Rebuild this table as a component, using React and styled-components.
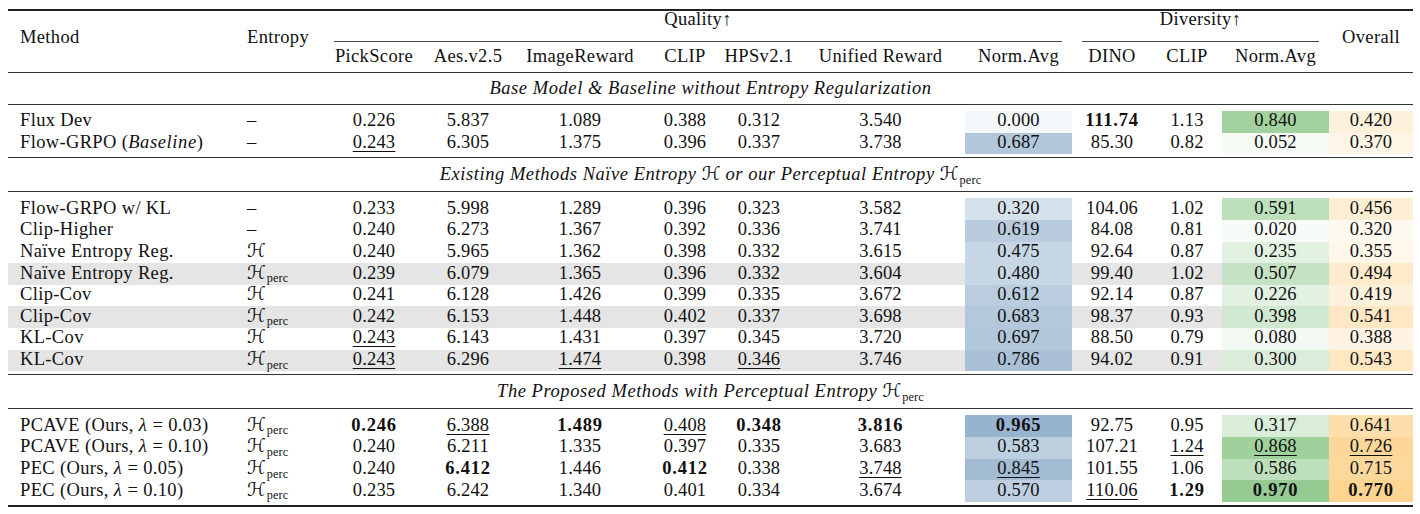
import React from "react";
import styled, { createGlobalStyle } from "styled-components";

const GlobalStyle = createGlobalStyle`
  body {
    margin: 0;
    background: #fff;
  }
`;

const Page = styled.div`
  padding: 9px 7px 0 8px;
  font-family: "Liberation Serif", "DejaVu Serif", serif;
  font-size: 18.5px;
  color: #111;
  letter-spacing: 0.35px;
`;

const Table = styled.table`
  width: 1405px;
  table-layout: fixed;
  border-collapse: separate;
  border-spacing: 0;
`;

const RuleCell = styled.td`
  padding: 0;
  height: 0;
  font-size: 0;
  line-height: 0;
  border-top: ${(p) => p.$w || 1}px solid ${(p) => (p.$w > 1 ? "#222" : "#333")};
`;

const GapCell = styled.td`
  padding: 0;
  font-size: 0;
  line-height: 0;
  height: ${(p) => p.$h}px;
`;

const HeadCell = styled.th`
  font-weight: 400;
  padding: 0 0 9px ${(p) => (p.$left ? "12px" : "0")};
  text-align: ${(p) => (p.$left ? "left" : "center")};
  vertical-align: middle;
  white-space: nowrap;
`;

const GroupCell = styled.th`
  font-weight: 400;
  padding: 0 10px;
  vertical-align: top;
`;

const GroupLabel = styled.div`
  height: 30px;
  line-height: 17px;
  text-align: center;
  border-bottom: 1px solid #444;
`;

const SubHead = styled.th`
  font-weight: 400;
  height: 29px;
  padding: 0 0 1px;
  text-align: center;
  vertical-align: middle;
  white-space: nowrap;
`;

const SectionCell = styled.td`
  height: ${(p) => p.$h - 1}px;
  padding: ${(p) => (p.$h > 31 ? "1px" : "0")} 0 1px;
  text-align: center;
  vertical-align: middle;
  font-style: italic;
  letter-spacing: 0.55px;
  white-space: nowrap;
`;

const DataRow = styled.tr`
  background: ${(p) => (p.$shade ? "#e5e5e5" : "transparent")};
`;

const Cell = styled.td`
  height: 19.65px;
  padding: 0 0 2px ${(p) => (p.$left ? "12px" : "0")};
  line-height: 19px;
  text-align: ${(p) => (p.$left ? "left" : "center")};
  vertical-align: middle;
  white-space: nowrap;
  background: ${(p) => p.$bg || "transparent"};
`;

const Value = styled.span`
  font-weight: ${(p) => (p.$bold ? 700 : 400)};
  text-decoration: ${(p) => (p.$under ? "underline" : "none")};
  text-decoration-thickness: 1px;
  text-underline-offset: 3px;
  letter-spacing: ${(p) => (p.$bold ? "0.8px" : "0.2px")};
`;

const Cal = styled.span`
  font-family: "DejaVu Sans", serif;
  font-style: normal;
  font-size: 1.02em;
  letter-spacing: 0;
  line-height: 0;
`;

const Sub = styled.span`
  font-size: 0.66em;
  font-style: normal;
  vertical-align: -0.3em;
  line-height: 0;
  letter-spacing: 0.2px;
  margin-left: 1px;
`;

const Ital = styled.i`
  letter-spacing: 0.6px;
`;

const H = () => <Cal>ℋ</Cal>;
const Hp = () => (
  <span>
    <Cal>ℋ</Cal>
    <Sub>perc</Sub>
  </span>
);

const mix = (base, frac) =>
  `rgb(${base.map((c) => Math.round(255 - frac * (255 - c))).join(",")})`;

const blue = (v) => mix([146, 176, 203], 0.1 + 0.85 * (v / 0.965));
const green = (v) => mix([140, 199, 137], 0.06 + 0.86 * ((v - 0.02) / 0.95));
const orange = (v) => mix([253, 210, 140], 0.12 + 0.84 * ((v - 0.32) / 0.45));

const widths = [227, 89, 100, 88, 136, 74, 74, 169, 107, 80, 70, 107, 84];

const Num = ({ s }) => {
  const bold = s.startsWith("*");
  const under = s.startsWith("_");
  const text = bold || under ? s.slice(1) : s;
  return (
    <Value $bold={bold} $under={under}>
      {text}
    </Value>
  );
};

const lam = (v) => (
  <>
    <Ital>λ</Ital> = {v}
  </>
);

const sections = [
  {
    label: "Base Model & Baseline without Entropy Regularization",
    h: 31,
    rows: [
      ["Flux Dev", "–", "0.226 5.837 1.089 0.388 0.312 3.540 0.000 *111.74 1.13 0.840 0.420"],
      [
        <>
          Flow-GRPO (<Ital>Baseline</Ital>)
        </>,
        "–",
        "_0.243 6.305 1.375 0.396 0.337 3.738 0.687 85.30 0.82 0.052 0.370",
      ],
    ],
  },
  {
    label: (
      <>
        Existing Methods Naïve Entropy <H /> or our Perceptual Entropy <Hp />
      </>
    ),
    h: 32,
    rows: [
      ["Flow-GRPO w/ KL", "–", "0.233 5.998 1.289 0.396 0.323 3.582 0.320 104.06 1.02 0.591 0.456"],
      ["Clip-Higher", "–", "0.240 6.273 1.367 0.392 0.336 3.741 0.619 84.08 0.81 0.020 0.320"],
      ["Naïve Entropy Reg.", <H />, "0.240 5.965 1.362 0.398 0.332 3.615 0.475 92.64 0.87 0.235 0.355"],
      ["Naïve Entropy Reg.", <Hp />, "0.239 6.079 1.365 0.396 0.332 3.604 0.480 99.40 1.02 0.507 0.494", true],
      ["Clip-Cov", <H />, "0.241 6.128 1.426 0.399 0.335 3.672 0.612 92.14 0.87 0.226 0.419"],
      ["Clip-Cov", <Hp />, "0.242 6.153 1.448 0.402 0.337 3.698 0.683 98.37 0.93 0.398 0.541", true],
      ["KL-Cov", <H />, "_0.243 6.143 1.431 0.397 0.345 3.720 0.697 88.50 0.79 0.080 0.388"],
      ["KL-Cov", <Hp />, "_0.243 6.296 _1.474 0.398 _0.346 3.746 0.786 94.02 0.91 0.300 0.543", true],
    ],
  },
  {
    label: (
      <>
        The Proposed Methods with Perceptual Entropy <Hp />
      </>
    ),
    h: 32,
    rows: [
      [<>PCAVE (Ours, {lam("0.03")})</>, <Hp />, "*0.246 _6.388 *1.489 _0.408 *0.348 *3.816 *0.965 92.75 0.95 0.317 0.641"],
      [<>PCAVE (Ours, {lam("0.10")})</>, <Hp />, "0.240 6.211 1.335 0.397 0.335 3.683 0.583 107.21 _1.24 _0.868 _0.726"],
      [<>PEC (Ours, {lam("0.05")})</>, <Hp />, "0.240 *6.412 1.446 *0.412 0.338 _3.748 _0.845 101.55 1.06 0.586 0.715"],
      [<>PEC (Ours, {lam("0.10")})</>, <Hp />, "0.235 6.242 1.340 0.401 0.334 3.674 0.570 _110.06 *1.29 *0.970 *0.770"],
    ],
  },
];

const num = (s) => parseFloat(s.replace(/^[*_]/, ""));

const Rule = ({ w }) => (
  <tr>
    <RuleCell colSpan={13} $w={w} />
  </tr>
);

const Gap = ({ h }) => (
  <tr>
    <GapCell colSpan={13} $h={h} />
  </tr>
);

function Row({ method, entropy, values, shade }) {
  const vals = values.split(" ");
  const bgFor = (i) => {
    if (i === 6) return blue(num(vals[i]));
    if (i === 9) return green(num(vals[i]));
    if (i === 10) return orange(num(vals[i]));
    return undefined;
  };
  return (
    <DataRow $shade={shade}>
      <Cell $left>{method}</Cell>
      <Cell $left>{entropy}</Cell>
      {vals.map((s, i) => (
        <Cell key={i} $bg={bgFor(i)}>
          <Num s={s} />
        </Cell>
      ))}
    </DataRow>
  );
}

export default function App() {
  return (
    <Page>
      <GlobalStyle />
      <Table>
        <colgroup>
          {widths.map((w, i) => (
            <col key={i} style={{ width: w }} />
          ))}
        </colgroup>
        <tbody>
          <Rule w={2} />
          <tr>
            <HeadCell rowSpan={2} $left>
              Method
            </HeadCell>
            <HeadCell rowSpan={2} $left>
              Entropy
            </HeadCell>
            <GroupCell colSpan={7}>
              <GroupLabel>Quality↑</GroupLabel>
            </GroupCell>
            <GroupCell colSpan={3}>
              <GroupLabel>Diversity↑</GroupLabel>
            </GroupCell>
            <HeadCell rowSpan={2}>Overall</HeadCell>
          </tr>
          <tr>
            {["PickScore", "Aes.v2.5", "ImageReward", "CLIP", "HPSv2.1", "Unified Reward", "Norm.Avg", "DINO", "CLIP", "Norm.Avg"].map(
              (t, i) => (
                <SubHead key={i}>{t}</SubHead>
              )
            )}
          </tr>
          {sections.map((sec, si) => (
            <React.Fragment key={si}>
              <Rule w={1} />
              <tr>
                <SectionCell colSpan={13} $h={sec.h}>
                  {sec.label}
                </SectionCell>
              </tr>
              <Rule w={1} />
              <Gap h={6} />
              {sec.rows.map((r, ri) => (
                <Row key={ri} method={r[0]} entropy={r[1]} values={r[2]} shade={r[3]} />
              ))}
              <Gap h={3} />
            </React.Fragment>
          ))}
          <Rule w={2} />
        </tbody>
      </Table>
    </Page>
  );
}
